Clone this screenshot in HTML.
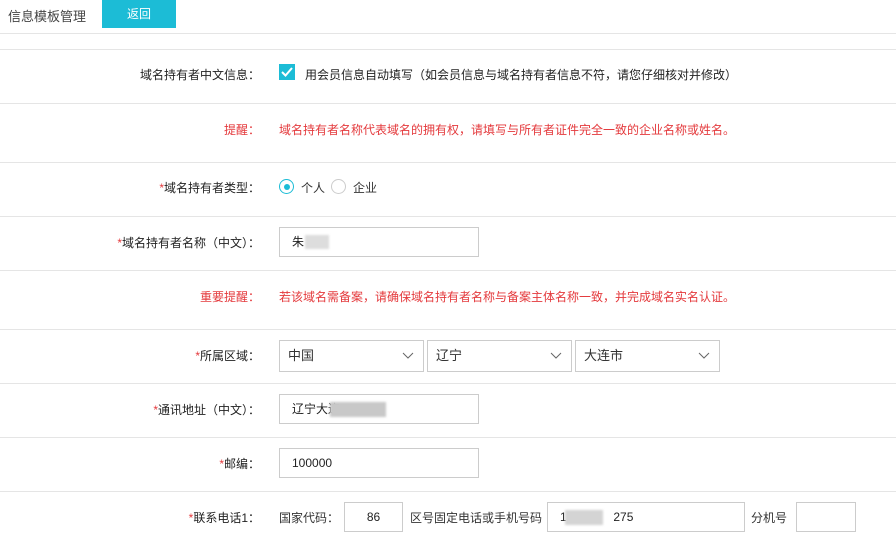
<!DOCTYPE html>
<html><head><meta charset="utf-8"><style>
body{margin:0;width:896px;height:535px;overflow:hidden;background:#fff;font-family:"Liberation Sans","Noto Sans CJK SC",sans-serif;font-size:12px;color:#333;position:relative}
.a{position:absolute}
.hl{position:absolute;left:0;width:896px;height:1px;background:#e5e5e5}
.lb{position:absolute;right:636px;text-align:right;white-space:nowrap;font-size:12px;color:#222}
.st{color:#e4393c}
.red{color:#e4393c}
.inp{position:absolute;border:1px solid #ccc;height:30px;box-sizing:border-box;background:#fff;line-height:28px;padding-left:12px;font-size:12px;color:#222}
.sel{position:absolute;border:1px solid #ccc;height:32px;top:340px;box-sizing:border-box;line-height:30px;padding-left:8px;font-size:13px;color:#333}
.sel svg{position:absolute;right:9px;top:11px}
.blur{position:absolute;background:#c8c8c8;filter:blur(1px)}
</style></head><body>
<div class="a" style="left:8px;top:6px;font-size:13px;color:#444">信息模板管理</div>
<div class="a" style="left:102px;top:0;width:74px;height:28px;background:#1cbcd6;color:#fff;font-size:12px;line-height:28px;text-align:center">返回</div>
<div class="hl" style="top:33px"></div>
<div class="hl" style="top:49px"></div>
<div class="hl" style="top:103px"></div>
<div class="hl" style="top:162px"></div>
<div class="hl" style="top:216px"></div>
<div class="hl" style="top:270px"></div>
<div class="hl" style="top:329px"></div>
<div class="hl" style="top:383px"></div>
<div class="hl" style="top:437px"></div>
<div class="hl" style="top:491px"></div>

<div class="lb" style="top:66px">域名持有者中文信息：</div>
<div class="a" style="left:279px;top:64px;width:16px;height:16px;background:#1cbcd6"><svg width="16" height="16"><path d="M3 8l3.5 3.5L13 4" stroke="#fff" stroke-width="2" fill="none"/></svg></div>
<div class="a" style="left:305px;top:66px;color:#222">用会员信息自动填写（如会员信息与域名持有者信息不符，请您仔细核对并修改）</div>

<div class="lb red" style="top:121px">提醒：</div>
<div class="a red" style="left:279px;top:121px">域名持有者名称代表域名的拥有权，请填写与所有者证件完全一致的企业名称或姓名。</div>

<div class="lb" style="top:179px"><span class="st">*</span>域名持有者类型：</div>
<div class="a" style="left:279px;top:179px;width:15px;height:15px;border:1px solid #1cbcd6;border-radius:50%;box-sizing:border-box"><div style="margin:3.5px;width:6px;height:6px;border-radius:50%;background:#1cbcd6"></div></div>
<div class="a" style="left:301px;top:179px">个人</div>
<div class="a" style="left:331px;top:179px;width:15px;height:15px;border:1px solid #ccc;border-radius:50%;box-sizing:border-box"></div>
<div class="a" style="left:353px;top:179px">企业</div>

<div class="lb" style="top:234px"><span class="st">*</span>域名持有者名称（中文）：</div>
<div class="inp" style="left:279px;top:227px;width:200px">朱</div>
<div class="blur" style="left:305px;top:235px;width:24px;height:14px;background:#ddd"></div>

<div class="lb red" style="top:288px">重要提醒：</div>
<div class="a red" style="left:279px;top:288px">若该域名需备案，请确保域名持有者名称与备案主体名称一致，并完成域名实名认证。</div>

<div class="lb" style="top:347px"><span class="st">*</span>所属区域：</div>
<div class="sel" style="left:279px;width:145px">中国<svg width="12" height="8"><path d="M1 1l5 5 5-5" stroke="#666" fill="none"/></svg></div>
<div class="sel" style="left:427px;width:145px">辽宁<svg width="12" height="8"><path d="M1 1l5 5 5-5" stroke="#666" fill="none"/></svg></div>
<div class="sel" style="left:575px;width:145px">大连市<svg width="12" height="8"><path d="M1 1l5 5 5-5" stroke="#666" fill="none"/></svg></div>

<div class="lb" style="top:401px"><span class="st">*</span>通讯地址（中文）：</div>
<div class="inp" style="left:279px;top:394px;width:200px">辽宁大连</div>
<div class="blur" style="left:330px;top:402px;width:56px;height:15px"></div>

<div class="lb" style="top:455px"><span class="st">*</span>邮编：</div>
<div class="inp" style="left:279px;top:448px;width:200px">100000</div>

<div class="lb" style="top:509px"><span class="st">*</span>联系电话1：</div>
<div class="a" style="left:279px;top:509px">国家代码：</div>
<div class="inp" style="left:344px;top:502px;width:59px;padding:0;text-align:center">86</div>
<div class="a" style="left:410px;top:509px">区号固定电话或手机号码</div>
<div class="inp" style="left:547px;top:502px;width:198px">1&nbsp;&nbsp;&nbsp;&nbsp;&nbsp;&nbsp;&nbsp;&nbsp;&nbsp;&nbsp;&nbsp;&nbsp;&nbsp;&nbsp;275</div>
<div class="blur" style="left:565px;top:510px;width:38px;height:15px;background:#d4d4d4"></div>
<div class="a" style="left:751px;top:509px">分机号</div>
<div class="inp" style="left:796px;top:502px;width:60px"></div>
</body></html>
